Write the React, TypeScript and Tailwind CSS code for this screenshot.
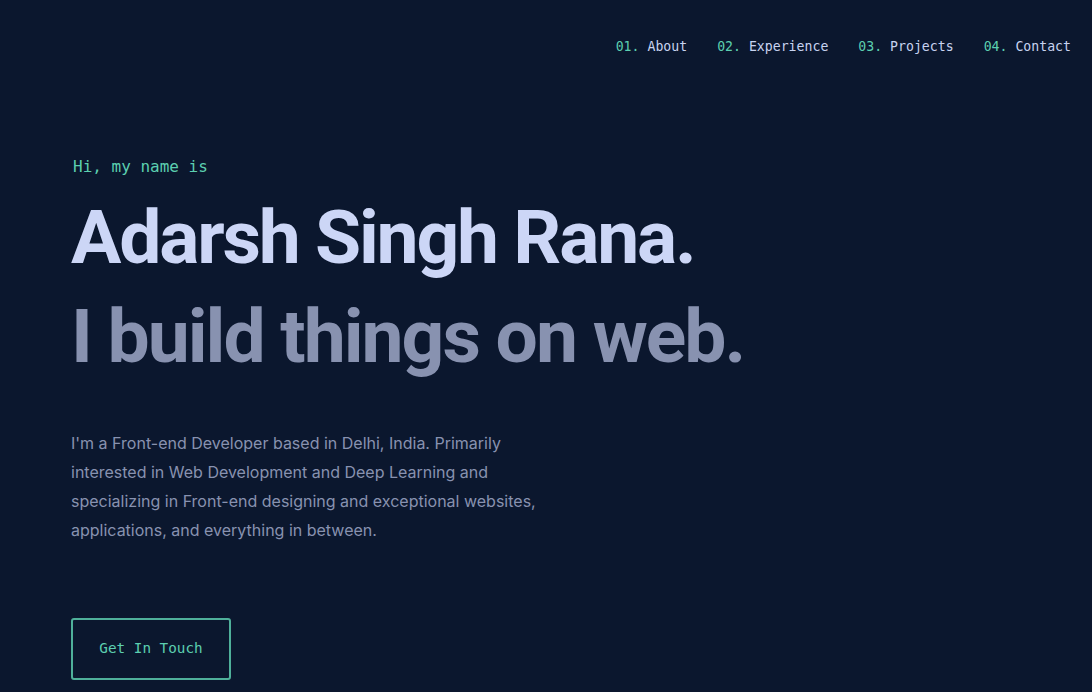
import React from "react";

const mono = { fontFamily: '"DejaVu Sans Mono", "Liberation Mono", monospace' };

export default function App() {
  const nav = [
    ["01.", "About"],
    ["02.", "Experience"],
    ["03.", "Projects"],
    ["04.", "Contact"],
  ];
  return (
    <div
      className="w-[1092px] h-[692px] bg-[#0b172e] overflow-hidden flex flex-col"
      style={{ fontFamily: 'Inter, "Noto Sans", sans-serif' }}
    >
      <nav className="flex justify-end gap-[30px] pr-[21px] pt-[39px] text-[13.2px] leading-[16px]" style={mono}>
        {nav.map(([n, l]) => (
          <div key={n} className="whitespace-pre">
            <span className="text-[#5ccfb0]">{n} </span>
            <span className="text-[#c8d3f0]">{l}</span>
          </div>
        ))}
      </nav>
      <main className="pl-[71px] pt-[100px] flex flex-col">
        <div className="text-[#5ccfb0] text-[16px] leading-[24px] pl-[2px]" style={mono}>
          Hi, my name is
        </div>
        <h1
          className="mt-[9px] text-[75px] leading-[99px] font-bold text-[#ccd6f6] tracking-[-2.2px]"
          style={{ fontFamily: 'Roboto, "Noto Sans", sans-serif' }}
        >
          Adarsh Singh Rana.
        </h1>
        <h2
          className="text-[75px] leading-[99px] font-bold text-[#8892b0] tracking-[-2px]"
          style={{ fontFamily: 'Roboto, "Noto Sans", sans-serif' }}
        >
          I build things on web.
        </h2>
        <p className="mt-[43px] w-[480px] text-[16px] leading-[29px] text-[#8892b0]">
          I'm a Front-end Developer based in Delhi, India. Primarily interested in Web Development and Deep Learning and
          specializing in Front-end designing and exceptional websites, applications, and everything in between.
        </p>
        <div className="mt-[73px]">
          <button
            className="w-[160px] h-[62px] border-[2px] border-[#4fb09a] rounded-[3px] text-[#5ccfb0] text-[14.3px]"
            style={mono}
          >
            Get In Touch
          </button>
        </div>
      </main>
    </div>
  );
}
